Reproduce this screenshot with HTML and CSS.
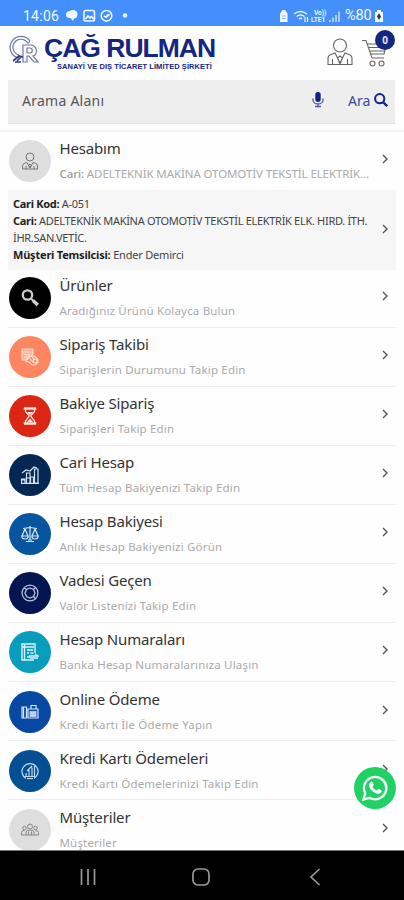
FILE: index.html
```html
<!DOCTYPE html>
<html lang="tr">
<head>
<meta charset="utf-8">
<meta name="viewport" content="width=device-width, initial-scale=1">
<title>Çağ Rulman</title>
<link rel="stylesheet" href="styles.css">
</head>
<body>
<div class="phone">
  <header class="status">
    <span class="clock">14:06</span>
    <svg class="status-left" viewBox="0 0 64 16" fill="none" stroke="#f4f8ff" stroke-width="1.6">
      <path d="M0 7a4 4 0 0 1 4-4 4.500 4 0 0 1 7.500 3c0 3-1.500 4.500-3.500 4.500l-1 2.500-2.500-3C2 10.500 0 9 0 7z" fill="#f4f8ff" stroke="none"/>
      <rect x="18" y="2.500" width="10.500" height="10.500" rx="1.500"/><path d="M19.500 11l2.500-3 2 2 1.500-1.500 2 2.500"/>
      <circle cx="40.500" cy="7.800" r="5.300"/><path d="M38 7.800l2 1.500 3.500-3M40.500 7h3"/>
      <circle cx="59" cy="7.500" r="2.200" fill="#f4f8ff" stroke="none"/>
    </svg>
    <svg class="status-right" viewBox="0 0 62 16" fill="none" stroke="#eef5ff" stroke-width="1.400">
      <path d="M1 5.500l1.500-2 1-1.500h2.500l1 1.500 1.500 2v8.500h-7.500z" fill="#f4f8ff" stroke="none"/><path d="M3 8h3.500M3 10.500h3.500" stroke="#7fb0f5" stroke-width="1"/>
      <path d="M15 6q6.500-5 13 0M17.500 8.500q4-3 8 0M20 11q1.500-1.500 3 0"/><path d="M26 9v5M28.500 14v-5" stroke-width="1.200"/>
      <path d="M51 14v-2M54 14v-4.500M57 14v-7M60 14V3.500" stroke-width="1.600" opacity=".75"/>
      <text x="35" y="7.200" class="volte">Vo))</text><text x="32" y="14" class="volte">LTE1</text>
    </svg>
    <span class="percent">%80</span>
    <svg class="battery" viewBox="0 0 8 12"><path d="M0 2h2V0h4v2h2v10H0z" fill="#f4f8ff"/><path d="M4 3l2 3.500L4 10 2 6.500z" fill="#243653"/></svg>
  </header>

  <section class="brandbar">
    <svg class="emblem" viewBox="0 0 32 32" fill="none" stroke="#6c76a8" stroke-width="1.200">
      <path d="M22 6A11 11 0 1 0 10 23M20 8.500A8 8 0 1 0 11 20M10 23l1.500-3M22 6l-2 2.500"/>
      <path d="M15 27V10h7c8 0 8 10 3 11l5 6h-4l-5-6h-2v6zM19 13v5h3c3 0 3-5 0-5z"/>
      <path d="M5 26l6-5 4 1M9 26l5-5M7 27h6" stroke="#303e8a" stroke-width="1.700"/>
    </svg>
    <div class="wordmark">
      <span class="name">ÇAĞ RULMAN</span>
      <span class="tagline">SANAYİ VE DIŞ TİCARET LİMİTED ŞİRKETİ</span>
    </div>
    <svg class="account" viewBox="0 0 26 28" fill="none" stroke="#666" stroke-width="1.100">
      <circle cx="13" cy="7.500" r="6.500"/><path d="M1 26.500v-6q0-3 3-4l4-1.500 5 10 5-10 4 1.500q3 1 3 4v6zM13 18l-2.500 2 2.500 6 2.500-6zM5.500 21v5M20.500 21v5"/>
    </svg>
    <div class="cart">
      <svg viewBox="0 0 26 29" fill="none" stroke="#666" stroke-width="1.100">
        <path d="M0 1.500h4l6 17.500h12M5.500 5h19l-2.500 10H9M6.500 8.500h17M7.700 12h15"/><circle cx="10.500" cy="24.500" r="2.500"/><circle cx="19.500" cy="24.500" r="2.500"/>
      </svg>
      <span class="count">0</span>
    </div>
  </section>

  <div class="search">
    <span class="placeholder">Arama Alanı</span>
    <svg class="mic" viewBox="0 0 12 16"><rect x="3.300" y="0" width="5.400" height="10" rx="2.700" fill="#14218a"/><path d="M1 6.500v1.500a5 4 0 0 0 10 0V6.500M6 12v2.500M3 14.500h6" fill="none" stroke="#4b57a3" stroke-width="1.300"/></svg>
    <span class="go">Ara</span>
    <svg class="lens" viewBox="0 0 14 14" fill="none" stroke="#17248a" stroke-width="2"><circle cx="5.700" cy="5.700" r="4.600"/><path d="M9 9l4.200 4.200" stroke-width="2.400"/></svg>
  </div>

  <main class="menu">
    <a class="row first">
      <span class="disc grey"><svg viewBox="0 0 18 18" fill="none" stroke="#777" stroke-width="1"><circle cx="9" cy="5" r="4"/><path d="M1.500 17v-3q0-2 2-2.700L6 10.500 9 16l3-5.500 2.500.8q2 .7 2 2.700v3zM9 12l-1.200 1.500L9 16l1.200-2.500zM5 14v3M13 14v3"/></svg></span>
      <span class="text"><b class="title">Hesabım</b><span class="sub company"><strong>Cari:</strong> ADELTEKNİK MAKİNA OTOMOTİV TEKSTİL ELEKTRİK...</span></span>
      <svg class="chev" viewBox="0 0 6 10"><path d="M1 1l4 4-4 4"/></svg>
    </a>
    <section class="details">
      <div class="lines">
        <p><strong>Cari Kod:</strong> A-051</p>
        <p><strong>Cari:</strong> ADELTEKNİK MAKİNA OTOMOTİV TEKSTİL ELEKTRİK ELK. HIRD. İTH.</p>
        <p>İHR.SAN.VETİC.</p>
        <p class="agent"><strong>Müşteri Temsilcisi:</strong> Ender Demirci</p>
      </div>
      <svg class="chev" viewBox="0 0 6 10"><path d="M1 1l4 4-4 4"/></svg>
    </section>
    <a class="row">
      <span class="disc black"><svg viewBox="0 0 18 18" fill="none" stroke="#ccc"><circle cx="6.500" cy="6" r="4.700" stroke-width="2.300"/><path d="M10 9.500l2.500 2.500" stroke-width="2"/><path d="M12 11.500l4.800 4.500" stroke-width="3.600"/></svg></span>
      <span class="text"><b class="title">Ürünler</b><span class="sub">Aradığınız Ürünü Kolayca Bulun</span></span>
      <svg class="chev" viewBox="0 0 6 10"><path d="M1 1l4 4-4 4"/></svg>
    </a>
    <a class="row">
      <span class="disc orange"><svg viewBox="0 0 18 18" fill="none" stroke="#ffe0d3" stroke-width="1.100"><path d="M1 1h11v5L6 12H1z" fill="#ffe0d3" fill-opacity=".45"/><path d="M1 4h11M3 6.500h6M3 9h4"/><path d="M5 11l4-3h4l4 3.500v3L14 17h-3l-3-3-3-.5zM9 11l3 3M10 8l4 4"/><circle cx="14" cy="13" r="2"/></svg></span>
      <span class="text"><b class="title">Sipariş Takibi</b><span class="sub">Siparişlerin Durumunu Takip Edin</span></span>
      <svg class="chev" viewBox="0 0 6 10"><path d="M1 1l4 4-4 4"/></svg>
    </a>
    <a class="row">
      <span class="disc red"><svg viewBox="0 0 18 18" fill="none" stroke="#ffe4df" stroke-width="1.300"><path d="M3 1h12M3 17h12M4.500 1.500v3L8 8.500v1L4.500 14v3M13.500 1.500v3L10 8.500v1l3.500 4.500v3M2.500 2.200h13M2.500 15.800h13"/><path d="M6 5h6L9 8zM6 15l3-3.500 3 3.500z" fill="#ffe4df" stroke="none"/></svg></span>
      <span class="text"><b class="title">Bakiye Sipariş</b><span class="sub">Siparişleri Takip Edin</span></span>
      <svg class="chev" viewBox="0 0 6 10"><path d="M1 1l4 4-4 4"/></svg>
    </a>
    <a class="row">
      <span class="disc navy"><svg viewBox="0 0 18 18" fill="none" stroke="#d5e2f0" stroke-width="1.200"><path d="M.5 17V13h3.500v4M5.500 17V7h3.500v10M9.500 17v-6h3v6M13.500 17V3h3.500v14zM0 17.300h18M1 7l4-3 4 1 4-4 3 1M1 14h3M6 12h3"/></svg></span>
      <span class="text"><b class="title">Cari Hesap</b><span class="sub">Tüm Hesap Bakiyenizi Takip Edin</span></span>
      <svg class="chev" viewBox="0 0 6 10"><path d="M1 1l4 4-4 4"/></svg>
    </a>
    <a class="row">
      <span class="disc blue"><svg viewBox="0 0 18 18" fill="none" stroke="#dbe9f7" stroke-width="1.200"><path d="M9 1v14M2 3.500l7-1 7 1M4 4L1 11M4 4l3 7M14 4l-3 7M14 4l3 7M.8 11h6.400c0 4-6.400 4-6.400 0zM10.800 11h6.400c0 4-6.400 4-6.400 0zM5 16.500h8M7 15h4"/></svg></span>
      <span class="text"><b class="title">Hesap Bakiyesi</b><span class="sub">Anlık Hesap Bakiyenizi Görün</span></span>
      <svg class="chev" viewBox="0 0 6 10"><path d="M1 1l4 4-4 4"/></svg>
    </a>
    <a class="row">
      <span class="disc midnight"><svg viewBox="0 0 18 18" fill="none" stroke="#b8c0df" stroke-width="1.300"><circle cx="9" cy="9" r="7.900"/><path d="M9 4l3.500 1.500L14 9l-1.500 3.500L9 14l-3.500-1.500L4 9l1.500-3.500zM3 4l2.500 1.500M12.500 12.500L15 15M14.500 3.500l-2 2"/></svg></span>
      <span class="text"><b class="title">Vadesi Geçen</b><span class="sub">Valör Listenizi Takip Edin</span></span>
      <svg class="chev" viewBox="0 0 6 10"><path d="M1 1l4 4-4 4"/></svg>
    </a>
    <a class="row">
      <span class="disc cyan"><svg viewBox="0 0 18 18" fill="none" stroke="#d8f3fa" stroke-width="1.400"><path d="M14 10V1H1v16h12M3.500 1v16M1 4h12M6 7h6M6 10h2M9.500 10h3M6 14h3M8 13h9l-3-2M17 15H9"/></svg></span>
      <span class="text"><b class="title">Hesap Numaraları</b><span class="sub">Banka Hesap Numaralarınıza Ulaşın</span></span>
      <svg class="chev" viewBox="0 0 6 10"><path d="M1 1l4 4-4 4"/></svg>
    </a>
    <a class="row">
      <span class="disc royal"><svg viewBox="0 0 18 18" fill="none" stroke="#d9e6fa" stroke-width="1.200"><path d="M1 4h4.500v11H1zM7 6h10v9H7zM10 6V2.500h5V6"/><path d="M8.500 8h7v6h-7z" fill="#a9c1e7" stroke="none"/><path d="M9 10h6M9 12.500h6M2.500 4v11"/></svg></span>
      <span class="text"><b class="title">Online Ödeme</b><span class="sub">Kredi Kartı İle Ödeme Yapın</span></span>
      <svg class="chev" viewBox="0 0 6 10"><path d="M1 1l4 4-4 4"/></svg>
    </a>
    <a class="row">
      <span class="disc azure"><svg viewBox="0 0 18 18" fill="none" stroke="#bdd8ef" stroke-width="1.200"><path d="M5 16.500A8 8 0 1 1 13 16.500M3.500 14.500h11M5 14v-3M8 14V8M11 14V5.500M13.500 14V4M6 9l5-5"/><path d="M6 16.500h6"/></svg></span>
      <span class="text"><b class="title">Kredi Kartı Ödemeleri</b><span class="sub">Kredi Kartı Ödemelerinizi Takip Edin</span></span>
      <svg class="chev" viewBox="0 0 6 10"><path d="M1 1l4 4-4 4"/></svg>
    </a>
    <a class="row">
      <span class="disc grey"><svg viewBox="0 0 18 18" fill="none" stroke="#888" stroke-width="1"><circle cx="9" cy="5.500" r="2.500"/><circle cx="3.500" cy="7" r="1.800"/><circle cx="14.500" cy="7" r="1.800"/><path d="M5 14v-3q0-2 4-2t4 2v3zM5 14H.5v-2.500q0-2 3-2M13 14h4.500v-2.500q0-2-3-2M7.500 10.500v3.500M10.500 10.500v3.500"/></svg></span>
      <span class="text"><b class="title">Müşteriler</b><span class="sub">Müşteriler</span></span>
      <svg class="chev" viewBox="0 0 6 10"><path d="M1 1l4 4-4 4"/></svg>
    </a>
  </main>

  <nav class="softkeys">
    <svg viewBox="0 0 16 18" class="k1"><path d="M1.500 1v16M8 1v16M14.500 1v16"/></svg>
    <svg viewBox="0 0 18 18" class="k2"><rect x="1" y="1" width="16" height="16" rx="5"/></svg>
    <svg viewBox="0 0 12 18" class="k3"><path d="M10.500 1L2 9l8.500 8"/></svg>
  </nav>

  <a class="whatsapp"><svg viewBox="0 0 26 26"><path d="M1.500 24.500l1.700-6.200A11.200 11.200 0 1 1 7.500 22.800z" fill="none" stroke="#fff" stroke-width="2.300"/><path d="M8.800 7c.6-.6 1.500-.5 1.800.2l1 2.300c.2.500 0 .9-1.100 2.200 1 1.900 2.400 3.100 4.400 3.900 1.300-1.600 1.600-1.700 2.100-1.500l2.200 1.100c.7.400.5 1.500-.1 2.300-1.300 1.500-3.200 1.600-5.600.6-3-1.200-5.200-3.700-6.100-5.900-.8-2-.3-4.100 1.400-5.200z" fill="#fff"/></svg></a>
</div>
</body>
</html>
```
FILE: styles.css
```css
* { box-sizing: border-box; }
body { margin: 0; background: #fff; font-family: "Noto Sans", sans-serif; }
svg { display: block; flex: none; }
p { margin: 0; }

.phone { position: relative; display: flex; flex-direction: column; width: 404px; height: 900px; overflow: hidden; background: #fefefe; }

.status { display: flex; align-items: center; flex: none; height: 26px; padding: 5px 0 0 23px; background: #438ffc; color: #f4f8ff; font: 14px/20px Roboto, sans-serif; }
.clock { width: 43px; letter-spacing: .25px; }
.status-left { width: 64px; height: 16px; }
.status-right { width: 62px; height: 16px; margin-left: 149px; }
.volte { font: bold 6.500px Roboto, sans-serif; fill: #eef5ff; stroke: none; }
.percent { width: 30px; margin-left: 4px; font-size: 14.500px; letter-spacing: -.1px; }
.battery { width: 8px; height: 12px; }

.brandbar { display: flex; flex: none; height: 54px; padding: 9px 8px 0; }
.emblem { width: 32px; height: 32px; }
.wordmark { display: flex; flex-direction: column; width: 287px; padding: 0 0 0 4px; color: #14267f; font-family: "Liberation Sans", sans-serif; font-weight: bold; white-space: nowrap; }
.name { height: 27px; font-size: 26.500px; line-height: 26px; letter-spacing: -1px; }
.tagline { padding-left: 13px; font-size: 7.500px; line-height: 9px; letter-spacing: .06px; }
.account { width: 26px; height: 28px; margin-top: 3px; }
.cart { position: relative; margin: 4px 0 0 9px; }
.cart svg { width: 26px; height: 29px; }
.count { position: absolute; left: 13px; top: -9px; width: 20px; height: 20px; border-radius: 50%; background: #14267f; color: #e4e7fa; font: bold 10px/20px "Noto Sans", sans-serif; text-align: center; }

.search { display: flex; flex: none; align-items: center; height: 44px; margin: 0 9px 0 8px; padding: 0 7px 3px 14px; background: #eee; border-bottom: 1px solid #e2e2e2; }
.placeholder { width: 290px; color: #555; font-size: 14px; letter-spacing: .25px; }
.mic { width: 12px; height: 16px; }
.go { width: 26px; margin-left: 24px; color: #3c4897; font-size: 14px; }
.lens { width: 14px; height: 14px; }

.menu { flex: 1; min-height: 0; overflow: hidden; margin-top: 6px; padding: 0 8px; border-top: 2px solid #f3f3f3; }
.row { display: flex; height: 59.100px; padding: 8.500px 8px 0 1px; border-bottom: 1.500px solid #eee; }
.row.first { height: 58.500px; padding-top: 8px; border-color: #f2f2f2; }
.disc { display: grid; place-items: center; flex: none; width: 42px; height: 42px; border-radius: 50%; }
.disc svg { width: 18px; height: 18px; }
.grey { background: #dedede; }
.black { background: #000; }
.orange { background: #fd8560; }
.red { background: #dc2614; }
.navy { background: #042853; }
.blue { background: #07559f; }
.midnight { background: #041552; }
.cyan { background: #089dbd; }
.royal { background: #0748a3; }
.azure { background: #044f92; }
.text { display: flex; flex-direction: column; flex: none; width: 331px; padding-left: 8.500px; white-space: nowrap; }
.title { height: 23px; margin-top: -2px; color: #333; font-size: 15px; font-weight: 400; line-height: 20px; letter-spacing: -.16px; }
.sub { margin-top: 4px; color: #aaa; font-size: 11.500px; line-height: 18px; letter-spacing: .18px; }
.company { letter-spacing: -.1px; }
.sub strong { font-weight: 500; color: #999; }
.chev { width: 6px; height: 10px; margin-top: 14px; fill: none; stroke: #555; stroke-width: 1.400; }

.details { display: flex; height: 79px; padding: 4px 8px 0 5px; background: #f6f6f6; }
.lines { flex: none; width: 369px; color: #444; font-size: 11px; line-height: 17px; letter-spacing: -.3px; white-space: nowrap; }
.lines strong { color: #222; font-weight: 700; }
.lines .agent { letter-spacing: -.2px; }
.details .chev { margin: 29px 0 0; }
.details + .row { height: 58px; padding-top: 7.500px; }

.softkeys { display: flex; flex: none; align-items: center; height: 50px; padding: 3px 0 0 80px; background: #000; border-top: 1px solid #777; }
.softkeys svg { fill: none; stroke: #999; stroke-width: 1.700; height: 18px; }
.k1 { width: 16px; }
.k2 { width: 18px; margin-left: 96px; }
.k3 { width: 12px; margin-left: 99px; }

.whatsapp { position: absolute; left: 354px; top: 767px; display: grid; place-items: center; width: 42px; height: 42px; border-radius: 50%; background: #20d163; }
.whatsapp svg { width: 26px; height: 26px; }
```
